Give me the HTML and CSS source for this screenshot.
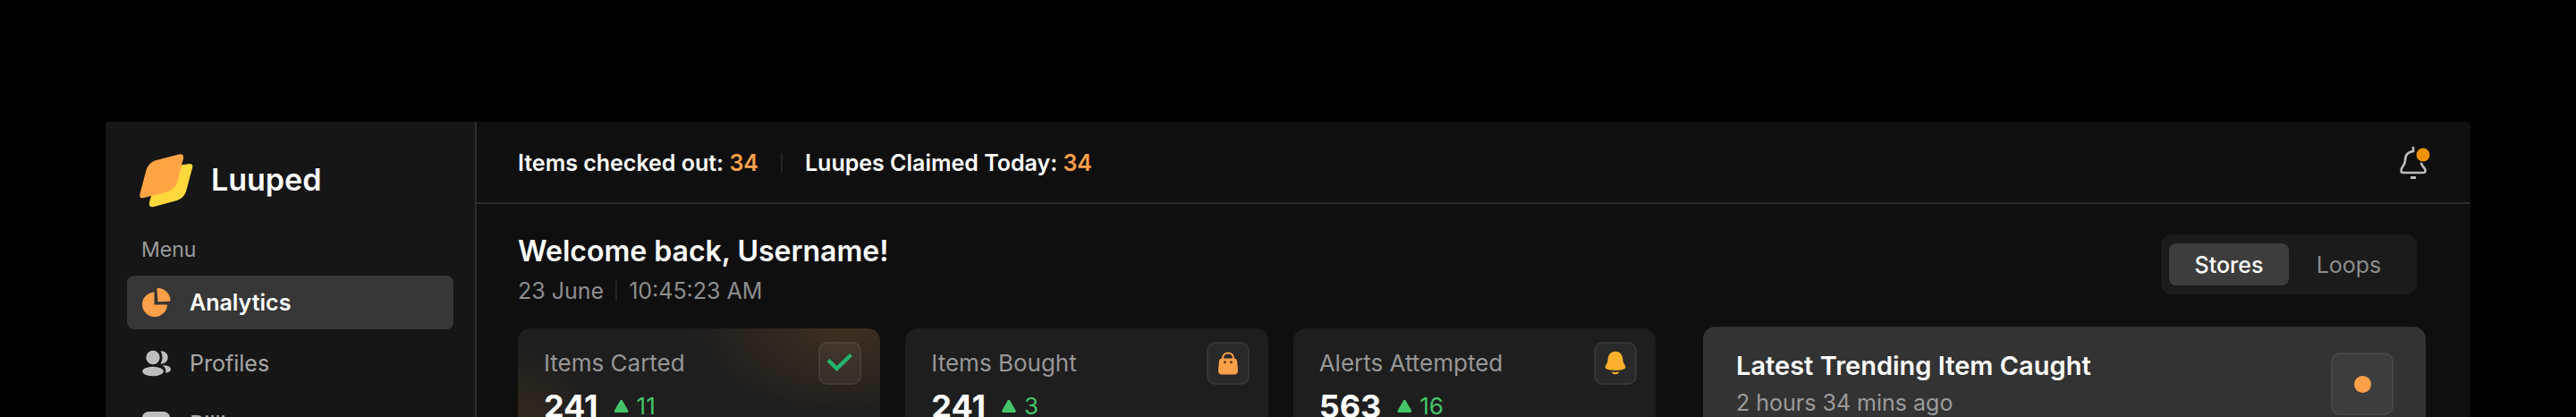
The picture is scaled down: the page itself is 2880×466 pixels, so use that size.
FILE: index.html
```html
<!DOCTYPE html>
<html lang="en">
<head>
  <meta charset="UTF-8">
  <meta name="viewport" content="width=device-width, initial-scale=1.0">
  <title>Luuped</title>
  <link rel="stylesheet" href="styles.css">
</head>
<body>
  <div class="app">
    <aside class="sidebar">
      <a class="brand" href="#">
        <svg class="brand-logo" viewBox="0 0 60 60" aria-hidden="true">
          <path fill="#ffd83d" d="M26 15.500 54.500 11.200Q60 10.500 59.200 15L52 42Q49.500 49.500 42 52L16 59Q10.500 60.500 10.800 55L18 28Q20 19 26 15.500Z"/>
          <path fill="#ffa445" d="M17 7.500 44 .500Q49.800-.8 49 5L42 32Q39 39.500 32 42L5 49Q-.8 50.300.500 44.500L7.500 18Q10 10.500 17 7.500Z"/>
        </svg>
        <span>Luuped</span>
      </a>
      <p class="menu-title">Menu</p>
      <nav class="menu">
        <a class="menu-item active" href="#">
          <svg viewBox="0 0 32 32" aria-hidden="true">
            <path fill="#ffa04a" d="M13.500 4.500V18.500H28A14 13.800 0 1 1 13.500 4.500Z"/>
            <path fill="#ffa04a" d="M16.500 1Q16.500 0 17.500 0A14.500 14 0 0 1 31.500 13.500Q31.500 14.800 30.500 14.800L17.500 15.200Z"/>
          </svg>
          Analytics
        </a>
        <a class="menu-item" href="#">
          <svg viewBox="0 0 32 32" aria-hidden="true" fill="#bdbdbd">
            <circle cx="12" cy="9.500" r="7.700"/>
            <ellipse cx="12" cy="25" rx="11.800" ry="5.300"/>
            <path d="M20.500 2.200C31.500 2 31.500 17 20.500 16.600Q24.500 9.500 20.500 2.200ZM22.500 18.200Q32 18.200 32 22.500 32 26.200 26 26.600 27.500 21.500 22.500 18.200Z"/>
          </svg>
          Profiles
        </a>
        <a class="menu-item" href="#">
          <svg viewBox="0 0 32 32" aria-hidden="true">
            <rect y="2" width="31" height="28" rx="7" fill="#bdbdbd"/>
            <path d="M6 9h10" stroke="#6a6a6a" stroke-width="2"/>
          </svg>
          Billing
        </a>
      </nav>
    </aside>

    <main class="main">
      <header class="topbar">
        <p class="counter">Items checked out: <b>34</b></p>
        <span class="divider"></span>
        <p class="counter">Luupes Claimed Today: <b>34</b></p>
        <button class="notify" aria-label="Notifications">
          <svg viewBox="0 0 36 40" aria-hidden="true">
            <path fill="none" stroke="#bdbdbd" stroke-width="2.600" stroke-linejoin="round" d="M16 2V8M17 7C9.500 7.500 7 12 7 17 7 23 2.500 24 2.500 29Q2.500 31 5 31H27Q30 31 29.500 28 29 26 26.500 23.500 25 22 25 19"/>
            <path stroke="#bdbdbd" stroke-width="3" d="M13 36.500H19"/>
            <circle cx="27" cy="11" r="9" fill="#0f0f0f"/>
            <circle cx="27" cy="11" r="7.500" fill="#ee9100"/>
          </svg>
        </button>
      </header>

      <section class="content">
        <div class="welcome">
          <div class="greeting">
            <h1>Welcome back, Username!</h1>
            <p class="date">23 June <span class="divider"></span> <time>10:45:23 AM</time></p>
          </div>
          <div class="switch">
            <button class="on">Stores</button>
            <button>Loops</button>
          </div>
        </div>

        <div class="panels">
          <div class="stats">
            <article class="stat glow">
              <h2>Items Carted</h2>
              <span class="stat-icon">
                <svg viewBox="0 0 28 28" aria-hidden="true"><path fill="none" stroke="#22b46c" stroke-width="4.400" d="M1 10.500 10.500 20 26.500 4.500"/></svg>
              </span>
              <p class="value">241 <span class="change">11</span></p>
            </article>
            <article class="stat">
              <h2>Items Bought</h2>
              <span class="stat-icon">
                <svg viewBox="0 0 28 28" aria-hidden="true">
                  <path fill="none" stroke="#ffa04a" stroke-width="2" d="M8 10V8A6 5.500 0 0 1 20 8V10"/>
                  <path fill="#ffa04a" d="M7 8.500H21Q23.500 8.500 24 11L25 22Q25 26.500 21 26.500H7Q3 26.500 3 22L4 11Q4.500 8.500 7 8.500Z"/>
                  <circle cx="10.500" cy="12.700" r="1.500" fill="#5a3c20"/>
                  <circle cx="17.500" cy="12.700" r="1.500" fill="#5a3c20"/>
                </svg>
              </span>
              <p class="value">241 <span class="change">3</span></p>
            </article>
            <article class="stat">
              <h2>Alerts Attempted</h2>
              <span class="stat-icon">
                <svg viewBox="0 0 28 28" aria-hidden="true" fill="#ffb02e">
                  <path d="M14 .800C8.500.800 5.800 5 5.600 10 5.500 14 2.800 15.500 2.600 18.500 2.600 23 25.400 23 25.400 18.500 25.200 15.500 22.500 14 22.400 10 22.200 5 19.500.800 14 .800Z"/>
                  <path d="M9.500 23.500Q14 24.300 18.500 23.500 17 26.300 14 26.300T9.500 23.500Z"/>
                </svg>
              </span>
              <p class="value">563 <span class="change">16</span></p>
            </article>
          </div>

          <article class="trending">
            <div>
              <h2>Latest Trending Item Caught</h2>
              <p>2 hours 34 mins ago</p>
            </div>
            <span class="trending-icon"></span>
          </article>
        </div>
      </section>
    </main>
  </div>
</body>
</html>
```
FILE: styles.css
```css
:root {
  --orange: #ffa04a;
  --green: #45c46a;
  --muted: #9b9b9b;
  --line: #2c2c2c;
}
* {
  box-sizing: border-box;
}
body {
  margin: 0;
  height: 100vh;
  padding: 136px 118px 0;
  background: #000;
  color: #fff;
  font-family: Inter, sans-serif;
  font-size: 25px;
  line-height: 32px;
  overflow: hidden;
}
h1, h2, p {
  margin: 0;
}
a {
  color: inherit;
  text-decoration: none;
}
button {
  padding: 0;
  border: none;
  background: none;
  color: inherit;
  font: inherit;
  cursor: pointer;
}
svg {
  display: block;
}
.app {
  display: flex;
  height: 100%;
  border-radius: 4px 4px 0 0;
  background: #0f0f0f;
  overflow: hidden;
}

/* sidebar */
.sidebar {
  flex: 0 0 415px;
  padding: 36px 24px 0;
  background: #161616;
  border-right: 2px solid var(--line);
}
.brand {
  display: flex;
  align-items: center;
  gap: 20px;
  padding-left: 14px;
  font-size: 34px;
  font-weight: 600;
}
.brand span {
  padding-bottom: 2px;
}
.brand-logo {
  width: 60px;
  height: 60px;
}
.menu-title {
  margin: 31px 0 13px;
  padding-left: 16px;
  color: var(--muted);
  font-size: 23px;
}
.menu {
  display: grid;
  gap: 8px;
}
.menu-item {
  display: flex;
  align-items: center;
  gap: 21px;
  height: 60px;
  padding: 0 17px;
  border-radius: 8px;
  color: #a8a8a8;
}
.menu-item svg {
  width: 32px;
  height: 32px;
}
.menu-item.active {
  background: #363636;
  color: #fff;
  font-weight: 600;
}

/* main */
.main {
  flex: 1;
  min-width: 0;
}
.topbar {
  display: flex;
  align-items: center;
  height: 92px;
  padding: 2px 44px 0 46px;
  border-bottom: 2px solid var(--line);
}
.counter {
  font-weight: 600;
}
.counter b {
  color: var(--orange);
  font-weight: 600;
}
.divider {
  width: 2px;
  height: 22px;
  background: #242424;
}
.topbar .divider {
  margin: 0 25px;
}
.notify {
  margin-left: auto;
}
.notify svg {
  width: 36px;
  height: 40px;
}
.content {
  padding: 34px 50px 0 46px;
}
.welcome {
  display: flex;
  justify-content: space-between;
  margin-bottom: 24px;
  padding-right: 10px;
}
.greeting {
  padding-top: 3px;
}
.welcome h1 {
  margin-bottom: 12px;
  font-size: 32px;
  font-weight: 600;
  line-height: 32px;
}
.date {
  display: flex;
  align-items: center;
  gap: 13px;
  color: #8d8d8d;
}
.switch {
  display: flex;
  height: 67px;
  padding: 10px 9px;
  border-radius: 12px;
  background: #1b1b1b;
}
.switch button {
  width: 134px;
  border-radius: 8px;
  color: #8d8d8d;
}
.switch .on {
  background: #3d3d3d;
  color: #fff;
  font-weight: 500;
}

/* cards */
.panels {
  display: grid;
  grid-template-columns: 1272fr 808fr;
  gap: 53px;
}
.stats {
  display: grid;
  grid-template-columns: repeat(3, 1fr);
  gap: 28px;
  padding-top: 2px;
}
.stat {
  display: grid;
  grid-template-columns: 1fr 48px;
  align-items: center;
  height: 180px;
  padding: 15px 21px 0 29px;
  border-radius: 14px;
  background: #1e1e1e;
  align-content: start;
}
.stat.glow {
  background:
    radial-gradient(ellipse 170px 100px at 90% 0, #402f20, transparent),
    radial-gradient(circle at 0 60%, #332a1e, transparent 90px),
    #1e1e1e;
}
.stat h2 {
  color: #979797;
  font-size: 26px;
  font-weight: 400;
}
.stat-icon {
  display: grid;
  place-items: center;
  height: 48px;
  border: 2px solid rgba(255, 255, 255, 0.06);
  border-radius: 10px;
  background: rgba(255, 255, 255, 0.05);
}
.stat-icon svg {
  width: 28px;
  height: 28px;
}
.value {
  display: flex;
  align-items: center;
  margin-top: 4px;
  font-size: 36px;
  font-weight: 700;
  line-height: 40px;
}
.change {
  display: flex;
  align-items: center;
  gap: 9px;
  margin-left: 18px;
  color: var(--green);
  font-size: 26px;
  font-weight: 400;
}
.change::before {
  content: "";
  width: 16px;
  height: 14px;
  background: var(--green);
  clip-path: polygon(44% 0, 56% 0, 100% 88%, 94% 100%, 6% 100%, 0 88%);
}
.trending {
  display: flex;
  justify-content: space-between;
  height: 182px;
  padding: 29px 36px 0 37px;
  border-radius: 14px;
  background: #333;
}
.trending h2 {
  margin-bottom: 10px;
  font-size: 29px;
  font-weight: 600;
  line-height: 30px;
}
.trending p {
  color: var(--muted);
}
.trending-icon {
  display: grid;
  place-items: center;
  width: 70px;
  height: 70px;
  border: 2px solid #464646;
  border-radius: 10px;
  background: #3d3d3d;
}
.trending-icon::before {
  content: "";
  width: 19px;
  height: 19px;
  border-radius: 50%;
  background: var(--orange);
}
```
